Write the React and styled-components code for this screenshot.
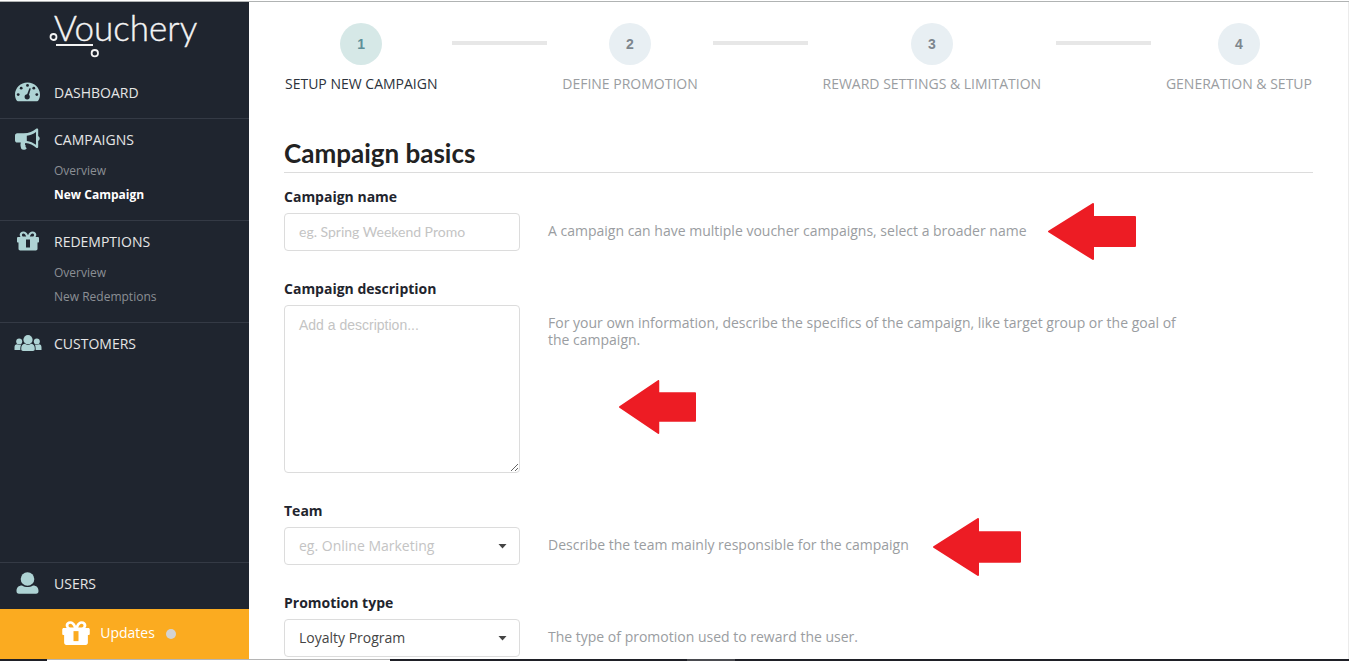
import React from 'react';
import styled, { createGlobalStyle, css } from 'styled-components';

const Global = createGlobalStyle`
  *, *::before, *::after { box-sizing: border-box; }
  body { margin: 0; background: #fff; font-family: "Open Sans", "Noto Sans", sans-serif; font-size: 14px; color: #1f252e; }
  ul { list-style: none; margin: 0; padding: 0; }
  a { color: inherit; text-decoration: none; }
`;

const Page = styled.div`
  height: 100vh;
  padding-top: 1px;
  display: flex;
  flex-direction: column;
`;

const Columns = styled.div`
  flex: 1;
  min-height: 0;
  border-top: 1px solid #b0b3b3;
  display: grid;
  grid-template-columns: 249px minmax(0, 1fr);
`;

const Sidebar = styled.aside`
  background: #1f252f;
  color: #e6e6e6;
  display: flex;
  flex-direction: column;
  min-height: 0;
`;

const Brand = styled.a`
  height: 69px;
  flex: none;
  padding-left: 48px;
`;

const Nav = styled.nav`
  flex: 1;
  display: flex;
  flex-direction: column;
`;

const Section = styled.section`
  border-top: 1px solid ${p => (p.$first ? 'transparent' : '#343a45')};
  padding: 2px 0 6px;
  margin-top: ${p => (p.$bottom ? 'auto' : '0')};
`;

const SectionLink = styled.a`
  height: 38px;
  display: grid;
  grid-template-columns: 28px 1fr;
  column-gap: 12px;
  align-items: center;
  padding: 0 0 2px 14px;
`;

const SubList = styled.ul`
  padding: 0 0 7px 54px;
`;

const SubLink = styled.a`
  display: block;
  font-size: 12px;
  line-height: 24px;
  color: ${p => (p.$active ? '#fff' : '#8b8f95')};
  font-weight: ${p => (p.$active ? 700 : 400)};
`;

const Updates = styled.button`
  height: 50px;
  flex: none;
  border: 0;
  padding: 0 12px 3px 0;
  background: #fbab20;
  color: #fff;
  font: inherit;
  display: flex;
  align-items: center;
  justify-content: center;
  gap: 9px;
`;

const Dot = styled.span`
  width: 10px;
  height: 10px;
  margin: 3px 0 0 2px;
  border-radius: 50%;
  background: #d3d3d3;
`;

const Main = styled.main`
  min-width: 0;
  overflow: hidden;
  border-right: 1px solid #ebebeb;
  padding: 21px 35px 0;
`;

const Steps = styled.ol`
  list-style: none;
  margin: 0;
  padding: 0 1px;
  display: flex;
  gap: 15px;
`;

const Step = styled.li`
  display: flex;
  flex-direction: column;
  align-items: center;
  gap: 9px;
  line-height: 20px;
  white-space: nowrap;
  color: ${p => (p.$current ? '#2c323b' : '#9a9da1')};
`;

const StepNumber = styled.span`
  width: 42px;
  height: 42px;
  border-radius: 50%;
  display: grid;
  place-items: center;
  font-family: "Liberation Sans", Arial, sans-serif;
  font-weight: 700;
  background: ${p => (p.$current ? '#d6e8e7' : '#e8eff3')};
  color: ${p => (p.$current ? '#5f8f99' : '#7d868d')};
`;

const StepLine = styled.li`
  flex: 1;
  height: 4px;
  margin-top: 18px;
  background: #e7e7e7;
`;

const Title = styled.h1`
  margin: 42px 0 14px;
  height: 37px;
  border-bottom: 1px solid #dcdcdc;
  font-family: Lato, "Open Sans", sans-serif;
  font-size: 26px;
  font-weight: 700;
  line-height: 34px;
  color: #222;
`;

const Form = styled.form`
  display: flex;
  flex-direction: column;
  gap: 28px;
`;

const FieldRow = styled.div`
  position: relative;
  display: grid;
  grid-template-columns: 236px minmax(0, 640px);
  column-gap: 28px;
  row-gap: 6px;
`;

const Label = styled.label`
  grid-column: 1 / -1;
  font-weight: 700;
  line-height: 20px;
`;

const Help = styled.p`
  margin: 0;
  padding-top: 9px;
  line-height: 17px;
  color: #9a9da1;
`;

const control = css`
  width: 100%;
  border: 1px solid #dcdcdc;
  border-radius: 4px;
  background: #fff;
  color: #444;
  font-size: 14px;
  outline: 0;
  &::placeholder { color: #c4c4c4; opacity: 1; }
`;

const TextInput = styled.input`
  ${control}
  height: 38px;
  padding: 0 14px 2px;
  font-family: Lato, sans-serif;
`;

const TextArea = styled.textarea`
  ${control}
  display: block;
  height: 168px;
  padding: 10px 14px;
  font-family: "Liberation Sans", Arial, sans-serif;
  line-height: 18px;
  resize: vertical;
`;

const SelectBox = styled.div`
  position: relative;
  height: 38px;
  svg { position: absolute; right: 13px; top: 17px; pointer-events: none; }
`;

const Select = styled.select`
  ${control}
  appearance: none;
  height: 38px;
  padding: 0 14px 2px;
  font-family: "Open Sans", sans-serif;
  color: ${p => (p.$empty ? '#c4c4c4' : '#444')};
`;

const Pointer = styled.svg`
  position: absolute;
  left: ${p => p.$left}px;
  top: ${p => p.$top}px;
`;

const Taskbar = styled.div`
  height: 2px;
  flex: none;
  display: grid;
  grid-template-columns: 47px 343px 297px 48px 1fr;
  background: #1f2027;
`;

const TaskbarPart = styled.span`
  grid-column: ${p => p.$col};
  grid-row: 1;
  background: ${p => p.$color};
  border-top: 1px solid ${p => p.$edge};
`;

const MINT = '#aed3d4';

const Logo = () => (
  <svg width="164" height="60" viewBox="0 0 164 60" role="img" aria-label="Vouchery">
    <text x="6" y="39" fill="#f4f4f4" stroke="#f4f4f4" strokeWidth="0.4" fontFamily="Lato, sans-serif" fontWeight="300" fontSize="35">Vouchery</text>
    <g fill="none" stroke="#f4f4f4" strokeWidth="1.8">
      <circle cx="5.500" cy="35" r="3" />
      <path d="M8 43H45" />
      <circle cx="46.800" cy="51.200" r="3.200" />
    </g>
  </svg>
);

const GaugeIcon = () => (
  <svg width="28" height="22" viewBox="0 0 28 22" aria-hidden="true">
    <path fill={MINT} d="M13.500 1.500C6.600 1.500 1 7 1 13.500c0 2.200.6 4.300 1.700 6.100.3.500.7.700 1.200.7h19.200c.5 0 .9-.2 1.200-.7 1.100-1.800 1.700-3.900 1.700-6.100C26 7 20.400 1.500 13.500 1.500z" />
    <g fill="#1f252f">
      <circle cx="4.200" cy="13.600" r="1.400" /><circle cx="7.200" cy="7.200" r="1.400" />
      <circle cx="13.500" cy="4.400" r="1.400" /><circle cx="19.800" cy="7.200" r="1.400" />
      <circle cx="22.800" cy="13.600" r="1.400" /><circle cx="13.200" cy="15.800" r="2.600" />
      <path d="M15.400 7.200l1.400.4-2.400 8.200-2-.5z" />
    </g>
  </svg>
);

const HornIcon = () => (
  <svg width="28" height="24" viewBox="0 -1 28 24" aria-hidden="true">
    <path fill={MINT} fillRule="evenodd" d="M22.500.6c.9-.4 1.700.1 1.700 1.100v6.600c1 .4 1.500 1.200 1.500 2.200s-.5 1.900-1.500 2.300v6c0 1-.8 1.500-1.700 1.100-3.500-2.900-6.600-4.500-11.100-5-.8 1-.5 1.900.3 2.700-.5 1 .1 1.800 1 2.600-.8 1.800-4.200 2-5.300.8-.7-2-1.400-4.100-.6-6.400H3.200C2 14.600 1 13.700 1 12.500v-5C1 6.300 2 5.300 3.200 5.300h6.500c5.300 0 9.100-1.600 12.800-4.700zM22 4c-2.800 2.100-5.700 3.300-9.200 3.800v5.100c3.500.5 6.400 1.700 9.200 3.800z" />
  </svg>
);

const GiftIcon = ({ width = 24, height = 20, color = MINT, slot = '#1f252f' }) => (
  <svg width={width} height={height} viewBox="0 0 24 20" aria-hidden="true">
    <g fill={color}>
      <path fillRule="evenodd" d="M12 4.200C10.900 1.700 9.500.5 7.500.5 5.200.5 3.700 2 3.700 3.700c0 .9.300 1.700.8 2.300H2.200C1.500 6 1 6.500 1 7.200v3.600c0 .4.300.7.700.7h.8v6.300c0 1 .8 1.700 1.700 1.700h15.600c1 0 1.700-.7 1.700-1.700v-6.300h.8c.4 0 .7-.3.700-.7V7.200c0-.7-.5-1.200-1.200-1.200h-2.300c.5-.6.8-1.400.8-2.300 0-1.700-1.500-3.200-3.800-3.200-2 0-3.400 1.200-4.500 3.700zM6 3.900c0-.8.600-1.400 1.500-1.400 1.100 0 1.900 1 2.700 3H7.500C6.600 5.500 6 4.800 6 3.900zm12 0c0-.8-.6-1.400-1.500-1.400-1.100 0-1.900 1-2.700 3h2.700c.9 0 1.500-.7 1.500-1.600z" />
    </g>
    <path fill={slot} d="M10 8.500h4v8h-4z" />
  </svg>
);

const GroupIcon = () => (
  <svg width="28" height="18" viewBox="0 0 28 18" aria-hidden="true">
    <g fill={MINT}>
      <circle cx="5.200" cy="7.500" r="3" /><circle cx="22.800" cy="7.500" r="3" />
      <path d="M.5 16v-2.500c0-2 1-3.200 2.600-3.200 1.500.8 2.700.8 4.200.2-.8 1.300-1 3-1 5.500z" />
      <path d="M27.500 16v-2.500c0-2-1-3.200-2.600-3.200-1.500.8-2.700.8-4.200.2.800 1.300 1 3 1 5.500z" />
      <circle cx="14" cy="5.700" r="4.600" />
      <path d="M7.200 15c0-3 1.200-5.200 3.500-5.200 2.200 1.500 4.400 1.500 6.600 0 2.300 0 3.500 2.200 3.500 5.200 0 1.300-.7 2-1.800 2H9c-1.100 0-1.800-.7-1.800-2z" />
    </g>
  </svg>
);

const UserIcon = () => (
  <svg width="28" height="24" viewBox="0 0 28 24" aria-hidden="true">
    <g fill={MINT}>
      <circle cx="13.500" cy="8" r="6.800" />
      <path d="M2.500 20c0-3.400 2-5.500 5.500-5.500 3.500 2.100 7.500 2.100 11 0 3.500 0 5.500 2.100 5.500 5.500 0 1.800-.8 2.800-2.500 2.800H5c-1.700 0-2.500-1-2.500-2.800z" />
    </g>
  </svg>
);

const Caret = () => (
  <svg width="9" height="5" viewBox="0 0 9 5" aria-hidden="true"><path fill="#444" d="M.5 0h8l-4 4.500z" /></svg>
);

const Arrow = ({ left, top, width, height }) => (
  <Pointer $left={left} $top={top} width={width} height={height} viewBox="0 0 88 57" preserveAspectRatio="none" aria-hidden="true">
    <path fill="#ed1c24" stroke="#ed1c24" strokeWidth="2" strokeLinejoin="round" d="M1 28.500L45 1v13h42v29H45v13z" />
  </Pointer>
);

const sections = [
  { name: 'DASHBOARD', icon: <GaugeIcon />, first: true },
  { name: 'CAMPAIGNS', icon: <HornIcon />, items: ['Overview', 'New Campaign'], active: 'New Campaign' },
  { name: 'REDEMPTIONS', icon: <GiftIcon width={28} />, items: ['Overview', 'New Redemptions'] },
  { name: 'CUSTOMERS', icon: <GroupIcon /> },
  { name: 'USERS', icon: <UserIcon />, bottom: true },
];

const steps = ['SETUP NEW CAMPAIGN', 'DEFINE PROMOTION', 'REWARD SETTINGS & LIMITATION', 'GENERATION & SETUP'];

export default function App() {
  return (
    <>
      <Global />
      <Page>
        <Columns>
          <Sidebar>
            <Brand href="#"><Logo /></Brand>
            <Nav>
              {sections.map(s => (
                <Section key={s.name} $first={s.first} $bottom={s.bottom}>
                  <SectionLink href="#">{s.icon}<span>{s.name}</span></SectionLink>
                  {s.items && (
                    <SubList>
                      {s.items.map(i => <li key={i}><SubLink href="#" $active={i === s.active}>{i}</SubLink></li>)}
                    </SubList>
                  )}
                </Section>
              ))}
            </Nav>
            <Updates type="button">
              <GiftIcon width={30} height={26} color="#fff" slot="#fbab20" />
              <span>Updates</span>
              <Dot />
            </Updates>
          </Sidebar>
          <Main>
            <Steps>
              {steps.map((s, i) => (
                <React.Fragment key={s}>
                  {i > 0 && <StepLine aria-hidden="true" />}
                  <Step $current={i === 0}>
                    <StepNumber $current={i === 0}>{i + 1}</StepNumber>
                    <span>{s}</span>
                  </Step>
                </React.Fragment>
              ))}
            </Steps>
            <Title>Campaign basics</Title>
            <Form>
              <FieldRow>
                <Label htmlFor="name">Campaign name</Label>
                <TextInput id="name" placeholder="eg. Spring Weekend Promo" />
                <Help>A campaign can have multiple voucher campaigns, select a broader name</Help>
                <Arrow left={764} top={16} width={88} height={57} />
              </FieldRow>
              <FieldRow>
                <Label htmlFor="description">Campaign description</Label>
                <TextArea id="description" placeholder="Add a description..." />
                <Help>For your own information, describe the specifics of the campaign, like target group or the goal of the campaign.</Help>
                <Arrow left={335} top={101} width={77} height={54} />
              </FieldRow>
              <FieldRow>
                <Label htmlFor="team">Team</Label>
                <SelectBox>
                  <Select id="team" $empty defaultValue=""><option value="">eg. Online Marketing</option></Select>
                  <Caret />
                </SelectBox>
                <Help>Describe the team mainly responsible for the campaign</Help>
                <Arrow left={649} top={17} width={88} height={58} />
              </FieldRow>
              <FieldRow>
                <Label htmlFor="type">Promotion type</Label>
                <SelectBox>
                  <Select id="type"><option>Loyalty Program</option></Select>
                  <Caret />
                </SelectBox>
                <Help>The type of promotion used to reward the user.</Help>
              </FieldRow>
            </Form>
          </Main>
        </Columns>
        <Taskbar>
          <TaskbarPart $col={2} $color="#fff" $edge="#b5b5b5" />
          <TaskbarPart $col={4} $color="#4a4b50" $edge="#4a4b50" />
        </Taskbar>
      </Page>
    </>
  );
}
